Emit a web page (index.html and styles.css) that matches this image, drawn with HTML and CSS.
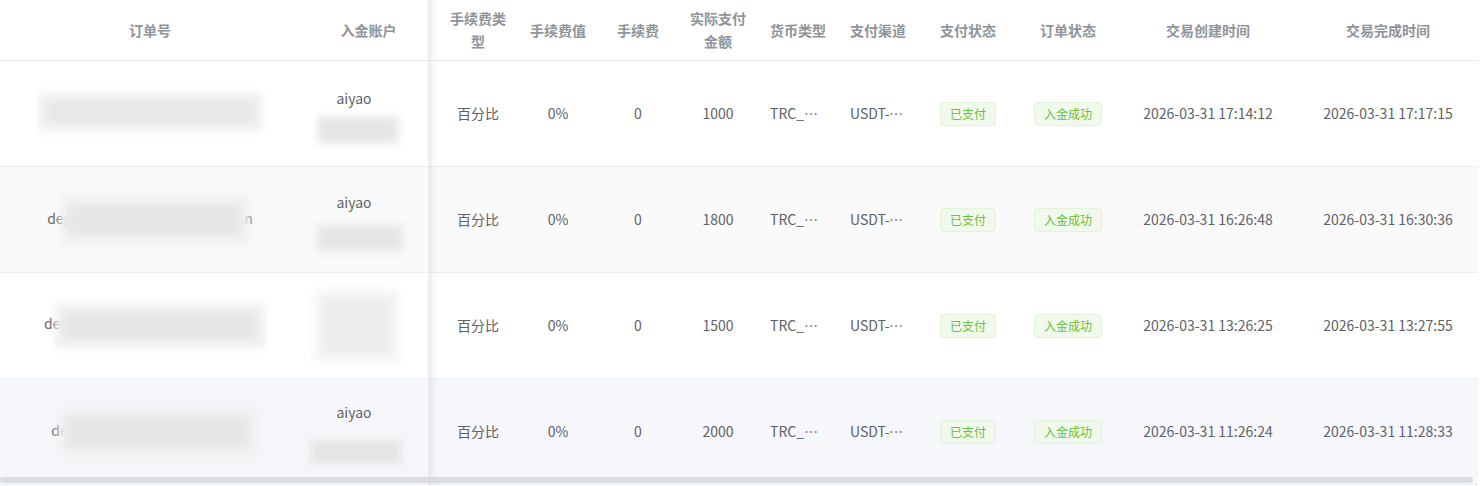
FILE: index.html
```html
<!DOCTYPE html>
<html lang="zh-CN">
<head>
<meta charset="utf-8">
<title>入金订单</title>
<link rel="stylesheet" href="styles.css">
</head>
<body>
<div class="table-wrap">
  <table class="grid">
    <colgroup>
      <col class="w-order">
      <col class="w-acct">
      <col class="w-first">
      <col class="w-80">
      <col class="w-80">
      <col class="w-80">
      <col class="w-80">
      <col class="w-80">
      <col class="w-100">
      <col class="w-100">
      <col class="w-180">
      <col class="w-180">
    </colgroup>
    <thead>
      <tr>
        <th><div class="cell">订单号</div></th>
        <th class="fix-last"><div class="cell acct-h">入金账户</div></th>
        <th class="first"><div class="cell">手续费类型</div></th>
        <th><div class="cell">手续费值</div></th>
        <th><div class="cell">手续费</div></th>
        <th><div class="cell">实际支付金额</div></th>
        <th><div class="cell">货币类型</div></th>
        <th><div class="cell">支付渠道</div></th>
        <th><div class="cell">支付状态</div></th>
        <th><div class="cell">订单状态</div></th>
        <th><div class="cell">交易创建时间</div></th>
        <th><div class="cell">交易完成时间</div></th>
      </tr>
    </thead>
    <tbody>
      <tr>
        <td><div class="cell order"><span class="mask m1"></span></div></td>
        <td class="fix-last"><div class="cell acct">aiyao<span class="mask-line ml1"></span></div></td>
        <td class="first"><div class="cell">百分比</div></td>
        <td><div class="cell">0%</div></td>
        <td><div class="cell">0</div></td>
        <td><div class="cell">1000</div></td>
        <td><div class="cell ellip">TRC_USDT</div></td>
        <td><div class="cell ellip">USDT-TRC20</div></td>
        <td><div class="cell"><span class="tag">已支付</span></div></td>
        <td><div class="cell"><span class="tag">入金成功</span></div></td>
        <td><div class="cell">2026-03-31 17:14:12</div></td>
        <td><div class="cell">2026-03-31 17:17:15</div></td>
      </tr>
      <tr class="striped">
        <td><div class="cell order">dep<span class="mask m2"></span>n</div></td>
        <td class="fix-last"><div class="cell acct">aiyao<span class="mask-line ml2"></span></div></td>
        <td class="first"><div class="cell">百分比</div></td>
        <td><div class="cell">0%</div></td>
        <td><div class="cell">0</div></td>
        <td><div class="cell">1800</div></td>
        <td><div class="cell ellip">TRC_USDT</div></td>
        <td><div class="cell ellip">USDT-TRC20</div></td>
        <td><div class="cell"><span class="tag">已支付</span></div></td>
        <td><div class="cell"><span class="tag">入金成功</span></div></td>
        <td><div class="cell">2026-03-31 16:26:48</div></td>
        <td><div class="cell">2026-03-31 16:30:36</div></td>
      </tr>
      <tr>
        <td><div class="cell order">dep<span class="mask m3"></span></div></td>
        <td class="fix-last"><div class="cell acct"><span class="mask-block"></span></div></td>
        <td class="first"><div class="cell">百分比</div></td>
        <td><div class="cell">0%</div></td>
        <td><div class="cell">0</div></td>
        <td><div class="cell">1500</div></td>
        <td><div class="cell ellip">TRC_USDT</div></td>
        <td><div class="cell ellip">USDT-TRC20</div></td>
        <td><div class="cell"><span class="tag">已支付</span></div></td>
        <td><div class="cell"><span class="tag">入金成功</span></div></td>
        <td><div class="cell">2026-03-31 13:26:25</div></td>
        <td><div class="cell">2026-03-31 13:27:55</div></td>
      </tr>
      <tr class="hover">
        <td><div class="cell order">de<span class="mask m4"></span></div></td>
        <td class="fix-last"><div class="cell acct">aiyao<span class="mask-line ml4"></span></div></td>
        <td class="first"><div class="cell">百分比</div></td>
        <td><div class="cell">0%</div></td>
        <td><div class="cell">0</div></td>
        <td><div class="cell">2000</div></td>
        <td><div class="cell ellip">TRC_USDT</div></td>
        <td><div class="cell ellip">USDT-TRC20</div></td>
        <td><div class="cell"><span class="tag">已支付</span></div></td>
        <td><div class="cell"><span class="tag">入金成功</span></div></td>
        <td><div class="cell">2026-03-31 11:26:24</div></td>
        <td><div class="cell">2026-03-31 11:28:33</div></td>
      </tr>
    </tbody>
  </table>
  <div class="hscroll"></div>
</div>
</body>
</html>
```
FILE: styles.css
```css
html, body {
  margin: 0;
  padding: 0;
  background: #fff;
}
body {
  font-family: "Noto Sans CJK SC", "Noto Sans", sans-serif;
  font-size: 14px;
  color: #606266;
}
.table-wrap {
  position: relative;
  height: 486px;
  overflow: hidden;
  width: 1478px;
}
.grid {
  table-layout: fixed;
  border-collapse: separate;
  border-spacing: 0;
  width: 1478px;
}
.w-order { width: 300px; }
.w-acct { width: 129px; }
.w-first { width: 89px; }
.w-80 { width: 80px; }
.w-100 { width: 100px; }
.w-180 { width: 180px; }

th, td {
  padding: 0;
  text-align: center;
  vertical-align: middle;
  border-bottom: 1px solid #ebeef5;
  background: #fff;
}
th {
  height: 60px;
}
td {
  height: 105px;
}
.striped td { background: #fafafa; }
.hover td { background: #f5f7fa; }

.cell {
  padding: 0 12px;
  line-height: 23px;
  box-sizing: border-box;
}
th .cell {
  font-weight: 700;
  color: #909399;
}
.first .cell {
  padding-left: 21px;
}
.acct-h {
  padding-left: 20px;
}
.ellip {
  white-space: nowrap;
  overflow: hidden;
  text-overflow: ellipsis;
  text-align: left;
}

.fix-last {
  position: relative;
}
.fix-last::after {
  content: "";
  position: absolute;
  top: 0;
  bottom: -1px;
  right: -10px;
  width: 10px;
  box-shadow: inset 10px 0 10px -10px rgba(0, 0, 0, 0.15);
  border-left: 1px solid #eceef2;
  pointer-events: none;
}

/* account cell: name + redacted second line */
.acct {
  display: flex;
  flex-direction: column;
  align-items: center;
  padding-right: 33px;
}
.mask-line {
  display: block;
  width: 74px;
  height: 20px;
  margin-top: 10px;
  margin-left: 8px;
  background: #e5e5e7;
  box-shadow: 0 0 0 5px #f0f0f1;
  filter: blur(3px);
}
.ml2 { width: 80px; margin-top: 14px; margin-left: 12px; }
.ml4 { width: 86px; margin-top: 18px; margin-left: 4px; }
.mask-block {
  display: block;
  width: 66px;
  height: 54px;
  margin: 0 0 0 6px;
  background: #ececee;
  box-shadow: 0 0 0 9px #f4f4f5;
  filter: blur(5px);
}

/* order number cell: partly redacted text */
.order {
  white-space: nowrap;
}
.mask {
  display: inline-block;
  vertical-align: middle;
  background: #e6e6e8;
  box-shadow: 0 0 0 9px #f0f0f1;
  filter: blur(4px);
}
.m1 { width: 205px; height: 20px; margin-top: -6px; }
.m2 { width: 172px; height: 30px; margin: 0 3px 0 -3px; }
.m3 { width: 192px; height: 26px; margin: 0 0 0 -5px; }
.m4 { width: 182px; height: 30px; margin: 0 0 0 -1px; }

.tag {
  display: inline-block;
  box-sizing: border-box;
  height: 24px;
  line-height: 22px;
  padding: 0 9px;
  font-size: 12px;
  color: #67c23a;
  background: #f0f9eb;
  border: 1px solid #e1f3d8;
  border-radius: 4px;
  white-space: nowrap;
}

.hscroll {
  position: absolute;
  left: 0;
  bottom: 3px;
  width: 1473px;
  height: 6px;
  border-radius: 3px;
  background: #dcdde0;
}
```
